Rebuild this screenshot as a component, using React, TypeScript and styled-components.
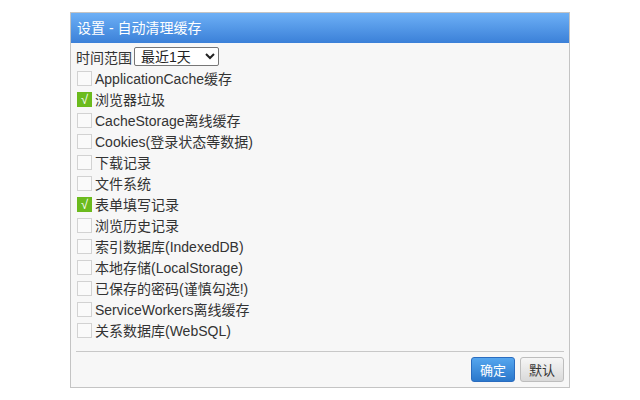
import { createGlobalStyle, styled } from 'styled-components';

const GlobalStyle = createGlobalStyle`
    body {
        margin: 0;
        background: #fff;
        font-family: "Liberation Sans", "Noto Sans CJK SC", sans-serif;
        font-size: 14px;
        color: #333;
    }
`;

const items = [
    { label: 'ApplicationCache缓存', checked: false },
    { label: '浏览器垃圾', checked: true },
    { label: 'CacheStorage离线缓存', checked: false },
    { label: 'Cookies(登录状态等数据)', checked: false },
    { label: '下载记录', checked: false },
    { label: '文件系统', checked: false },
    { label: '表单填写记录', checked: true },
    { label: '浏览历史记录', checked: false },
    { label: '索引数据库(IndexedDB)', checked: false },
    { label: '本地存储(LocalStorage)', checked: false },
    { label: '已保存的密码(谨慎勾选!)', checked: false },
    { label: 'ServiceWorkers离线缓存', checked: false },
    { label: '关系数据库(WebSQL)', checked: false },
];

export default function App() {
    return (
        <>
            <GlobalStyle />
            <Dialog>
                <Title>设置 - 自动清理缓存</Title>
                <Body>
                    <Row>
                        时间范围
                        <Select defaultValue="1d">
                            <option value="1h">最近1小时</option>
                            <option value="1d">最近1天</option>
                            <option value="7d">最近7天</option>
                            <option value="all">全部</option>
                        </Select>
                    </Row>
                    {items.map((item) => (
                        <Row key={item.label}>
                            <Check $checked={item.checked}>{item.checked ? '√' : ''}</Check>
                            {item.label}
                        </Row>
                    ))}
                    <Divider />
                    <Footer>
                        <Button $primary>确定</Button>
                        <Button>默认</Button>
                    </Footer>
                </Body>
            </Dialog>
        </>
    );
}

const Dialog = styled.div`
    width: 498px;
    margin: 12px auto 0;
    border: 1px solid #c4c4c4;
    background: #f7f7f7;
`;

const Title = styled.div`
    height: 30px;
    line-height: 30px;
    padding: 0 6px;
    color: #fff;
    font-size: 14px;
    background: linear-gradient(to bottom, #6db0f6, #3b80d8);
`;

const Body = styled.div`
    padding: 3px 5px 0 5px;
`;

const Row = styled.div`
    display: flex;
    align-items: center;
    height: 21px;
    white-space: nowrap;
`;

const Select = styled.select`
    margin-left: 2px;
    width: 85px;
    height: 19px;
    padding: 0 2px;
    font-family: "Liberation Sans", "Noto Sans CJK SC", sans-serif;
    font-size: 14px;
    color: #222;
    background: #fff;
    border: 1px solid #767676;
    border-radius: 2px;
`;

const Check = styled.span<{ $checked?: boolean }>`
    flex-shrink: 0;
    box-sizing: border-box;
    width: 15px;
    height: 15px;
    margin: 1px 3px 0 1px;
    border: 1px solid ${(p) => (p.$checked ? '#6bb91c' : '#d2d2d2')};
    background: ${(p) => (p.$checked ? '#6bbb1e' : '#fafafa')};
    color: #fff;
    font-size: 13px;
    line-height: 13px;
    text-align: center;
`;

const Divider = styled.div`
    height: 1px;
    margin: 11px 0 0;
    background: #c8c8c8;
`;

const Footer = styled.div`
    display: flex;
    justify-content: flex-end;
    gap: 5px;
    padding: 5px 0 5px;
`;

const Button = styled.button<{ $primary?: boolean }>`
    box-sizing: border-box;
    height: 25px;
    padding: 0 8px;
    font-family: "Liberation Sans", "Noto Sans CJK SC", sans-serif;
    font-size: 13px;
    border-radius: 3px;
    border: 1px solid ${(p) => (p.$primary ? '#2a6cbf' : '#bdbdbd')};
    color: ${(p) => (p.$primary ? '#fff' : '#333')};
    background: ${(p) =>
        p.$primary
            ? 'linear-gradient(to bottom, #55a6ee, #2b78cc)'
            : 'linear-gradient(to bottom, #f6f6f6, #d9d9d9)'};
`;
